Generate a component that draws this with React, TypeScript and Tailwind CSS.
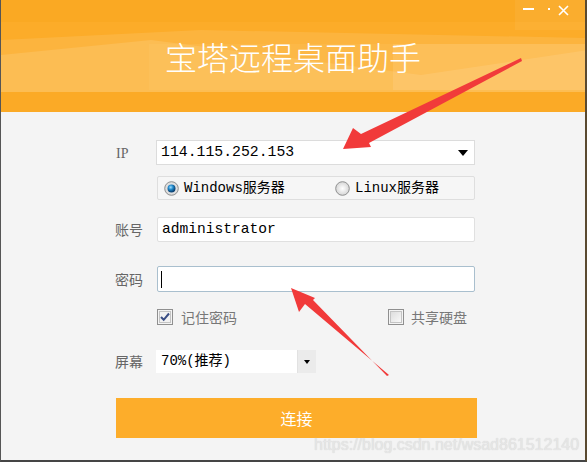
import React from "react";

const mono = { fontFamily: '"Liberation Mono", "Noto Sans CJK SC", monospace' };

function Radio({ checked }: { checked?: boolean }) {
  return (
    <svg width="15" height="15" viewBox="0 0 15 15" className="shrink-0">
      <defs>
        <radialGradient id="rOff" cx="0.5" cy="0.5" r="0.5">
          <stop offset="0" stopColor="#ffffff" />
          <stop offset="1" stopColor="#d6d6d6" />
        </radialGradient>
        <radialGradient id="rOn" cx="0.4" cy="0.35" r="0.6">
          <stop offset="0" stopColor="#9fe0ff" />
          <stop offset="0.5" stopColor="#1f86c8" />
          <stop offset="1" stopColor="#0b3f6e" />
        </radialGradient>
      </defs>
      <circle cx="7.5" cy="7.5" r="6.8" fill="url(#rOff)" stroke="#8e8f8f" strokeWidth="1" />
      {checked && <circle cx="7.5" cy="7.5" r="4" fill="url(#rOn)" />}
    </svg>
  );
}

function Check({ checked }: { checked?: boolean }) {
  return (
    <svg width="16" height="16" viewBox="0 0 16 16" className="shrink-0">
      <defs>
        <linearGradient id="cb" x1="0" y1="0" x2="1" y2="1">
          <stop offset="0" stopColor="#dcdcdc" />
          <stop offset="1" stopColor="#fafafa" />
        </linearGradient>
      </defs>
      <rect x="0.5" y="0.5" width="15" height="15" fill="#f4f4f4" stroke="#8f8f8f" />
      <rect x="2.5" y="2.5" width="11" height="11" fill={checked ? "#f2f2f2" : "url(#cb)"} stroke="#c4c4c4" />
      {checked && (
        <path d="M4 8 L6.7 10.8 L12 4.5" fill="none" stroke="#3a4e85" strokeWidth="2" />
      )}
    </svg>
  );
}

function Label({ children }: { children: React.ReactNode }) {
  return <span className="w-[41px] shrink-0 text-[14px] text-[#666]">{children}</span>;
}

export default function App() {
  return (
    <div
      className="relative w-[587px] h-[462px] overflow-hidden bg-[#f4f4f4] border-l border-[#555] border-b-2 border-r-2 border-b-[#454545] border-r-[#5a4a30] flex flex-col"
      style={{ fontFamily: '"Noto Sans CJK SC", sans-serif' }}
    >
      {/* header */}
      <header className="relative h-[112px] shrink-0 bg-[#fcac29] flex items-center justify-center">
        <svg className="absolute inset-0" width="587" height="112" viewBox="0 0 587 112">
          <rect x="0" y="0" width="587" height="22" fill="#f9a61f" opacity="0.6" />
          <polygon points="0,40 200,30 587,38 587,92 0,92" fill="#ffd28a" opacity="0.22" />
          <polygon points="0,55 150,40 420,75 587,50 587,92 0,92" fill="#ffe0a8" opacity="0.2" />
          <rect x="148" y="44" width="244" height="46" fill="#ffd58f" opacity="0.12" />
          <rect x="392" y="44" width="195" height="46" fill="#ffe0a8" opacity="0.25" />
          <polygon points="0,92 587,92 587,112 0,112" fill="#fbaa26" />
          <rect x="514" y="0" width="73" height="30" fill="#ffffff" opacity="0.05" />
        </svg>
        <div className="absolute top-[2px] right-0 flex items-center text-white text-[14px] leading-none">
          <span className="w-[11px] h-[2px] bg-white mr-[14px]" />
          <span className="w-[2px] h-[2px] bg-white mr-[8px]" />
          <svg width="11" height="11" viewBox="0 0 11 11" className="mr-[16px] mt-[3px]">
            <path d="M1 1 L10 10 M10 1 L1 10" stroke="#fff" strokeWidth="1.6" />
          </svg>
        </div>
        <h1 className="relative text-white text-[32px] font-light leading-none -mt-[1px]" style={{ fontFamily: '"Noto Sans CJK SC", serif' }}>
          宝塔远程桌面助手
        </h1>
      </header>

      {/* form */}
      <main className="flex flex-col pl-[114px] pt-[28px]">
        <div className="flex items-center h-[25px]">
          <Label><span className="pl-[1px]" style={{ fontFamily: '"Liberation Serif", serif' }}>IP</span></Label>
          <div className="w-[319px] h-[25px] bg-white border border-[#dcdcdc] flex items-center pl-[4px] pr-[6px]">
            <span className="flex-1 text-[14.8px] text-black" style={mono}>114.115.252.153</span>
            <svg width="10" height="6" viewBox="0 0 10 6"><path d="M0 0 H10 L5 6 Z" fill="#000" /></svg>
          </div>
        </div>

        <div className="flex items-center mt-[11px] h-[24px]">
          <span className="w-[42px]" />
          <div className="w-[318px] h-[24px] bg-[#f6f6f6] border border-[#dedede] rounded-[2px] flex items-center pl-[6px]">
            <Radio checked />
            <span className="ml-[5px] text-[14px] text-black w-[151px]" style={mono}>Windows服务器</span>
            <Radio />
            <span className="ml-[5px] text-[14px] text-black" style={mono}>Linux服务器</span>
          </div>
        </div>

        <div className="flex items-center mt-[17px] h-[25px]">
          <Label>账号</Label>
          <div className="w-[318px] h-[25px] ml-[1px] bg-white border border-[#e0e0e0] rounded-[2px] flex items-center pl-[4px]">
            <span className="text-[14.6px] text-black" style={mono}>administrator</span>
          </div>
        </div>

        <div className="flex items-center mt-[24px] h-[26px]">
          <Label>密码</Label>
          <div className="w-[318px] h-[26px] ml-[1px] bg-white border border-[#a9bfce] rounded-[2px] flex items-center pl-[3px]">
            <span className="w-[1px] h-[17px] bg-black" />
          </div>
        </div>

        <div className="flex items-center mt-[17px] h-[16px]">
          <span className="w-[42px]" />
          <Check checked />
          <span className="ml-[8px] text-[14px] text-[#777] w-[207px]">记住密码</span>
          <Check />
          <span className="ml-[7px] text-[14px] text-[#777]">共享硬盘</span>
        </div>

        <div className="flex items-center mt-[25px] h-[23px]">
          <Label>屏幕</Label>
          <div className="w-[160px] h-[23px] bg-white flex items-center">
            <span className="flex-1 pl-[5px] text-[14px] text-black" style={mono}>70%(推荐)</span>
            <div className="w-[19px] h-[23px] bg-[#ebebeb] border-l border-[#e2e2e2] flex items-center justify-center">
              <svg width="6" height="4" viewBox="0 0 6 4"><path d="M0 0 H6 L3 4 Z" fill="#000" /></svg>
            </div>
          </div>
        </div>

        <button className="mt-[25px] ml-[1px] w-[361px] h-[40px] bg-[#fdad2a] text-white text-[16px] flex items-center justify-center">
          连接
        </button>
      </main>

      <span
        className="absolute left-[313px] top-[437px] text-[16px] text-[#e6e6e6] leading-none"
        style={{ fontFamily: '"Liberation Sans", sans-serif', textShadow: "0 0 1px #cfcfcf" }}
      >
        https://blog.csdn.net/wsad861512140
      </span>

      {/* annotation arrows */}
      <svg className="absolute inset-0 pointer-events-none" width="587" height="462" viewBox="0 0 587 462">
        <polygon points="520,58 521,61 368,143 370,147 342,149 352,128 360,134" fill="#f13a3a" />
        <polygon points="388,375 386,376 312,300 314,298 290,288 298,312 304,304" fill="#f13a3a" />
      </svg>
    </div>
  );
}
